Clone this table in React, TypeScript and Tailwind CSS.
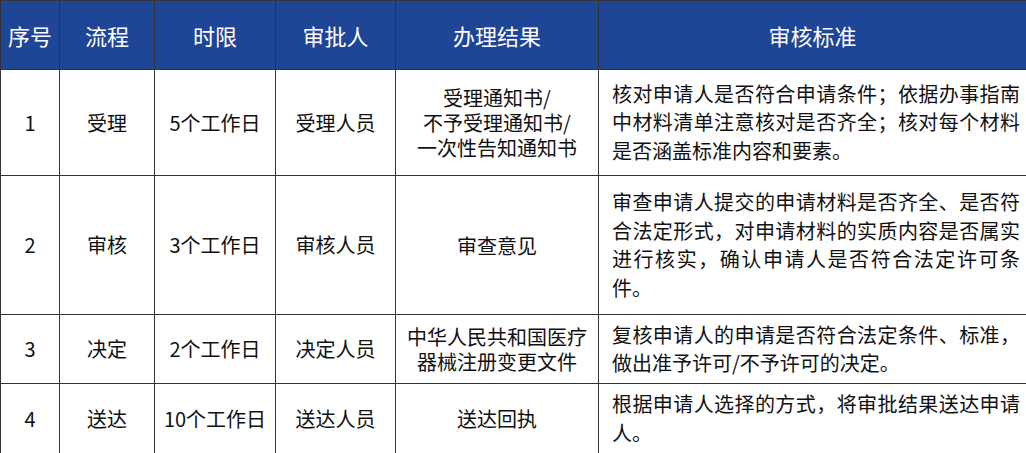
import { Fragment } from 'react'

const rows = [
  {
    no: '1',
    step: '受理',
    limit: '5个工作日',
    who: '受理人员',
    result: ['受理通知书/', '不予受理通知书/', '一次性告知通知书'],
    rule: '核对申请人是否符合申请条件；依据办事指南中材料清单注意核对是否齐全；核对每个材料是否涵盖标准内容和要素。',
    h: 'h-[106px]',
  },
  {
    no: '2',
    step: '审核',
    limit: '3个工作日',
    who: '审核人员',
    result: ['审查意见'],
    rule: '审查申请人提交的申请材料是否齐全、是否符合法定形式，对申请材料的实质内容是否属实进行核实，确认申请人是否符合法定许可条件。',
    h: 'h-[139px]',
  },
  {
    no: '3',
    step: '决定',
    limit: '2个工作日',
    who: '决定人员',
    result: ['中华人民共和国医疗', '器械注册变更文件'],
    rule: '复核申请人的申请是否符合法定条件、标准，做出准予许可/不予许可的决定。',
    h: 'h-[69px]',
  },
  {
    no: '4',
    step: '送达',
    limit: '10个工作日',
    who: '送达人员',
    result: ['送达回执'],
    rule: '根据申请人选择的方式，将审批结果送达申请人。',
    h: 'h-[70px]',
  },
]

const headers = ['序号', '流程', '时限', '审批人', '办理结果', '审核标准']

export default function App() {
  return (
    <div className="w-[1026px] h-[453px] bg-white overflow-hidden font-['Noto_Sans_CJK_SC',sans-serif] text-[#111]">
      <table className="w-[1026px] table-fixed border-collapse">
        <colgroup>
          <col className="w-[59px]" />
          <col className="w-[95px]" />
          <col className="w-[121px]" />
          <col className="w-[120px]" />
          <col className="w-[203px]" />
          <col className="w-[428px]" />
        </colgroup>
        <thead>
          <tr className="h-[69px] bg-[#1f4597]">
            {headers.map((h) => (
              <th
                key={h}
                className="border border-[#333] text-white text-[22px] leading-[28px] font-normal text-center p-0"
              >
                {h}
              </th>
            ))}
          </tr>
        </thead>
        <tbody>
          {rows.map((r) => (
            <tr key={r.no} className={r.h}>
              <td className="border border-[#333] text-center text-[20px] p-0">{r.no}</td>
              <td className="border border-[#333] text-center text-[20px] p-0">{r.step}</td>
              <td className="border border-[#333] text-center text-[20px] p-0">{r.limit}</td>
              <td className="border border-[#333] text-center text-[20px] p-0">{r.who}</td>
              <td className="border border-[#333] text-center text-[20px] leading-[25px] p-0">
                {r.result.map((line, i) => (
                  <Fragment key={line}>
                    {i > 0 && <br />}
                    {line}
                  </Fragment>
                ))}
              </td>
              <td className="border border-[#333] text-[20px] leading-[28.5px] pl-[13px] pr-[6px] py-0 text-justify">
                {r.rule}
              </td>
            </tr>
          ))}
        </tbody>
      </table>
    </div>
  )
}
